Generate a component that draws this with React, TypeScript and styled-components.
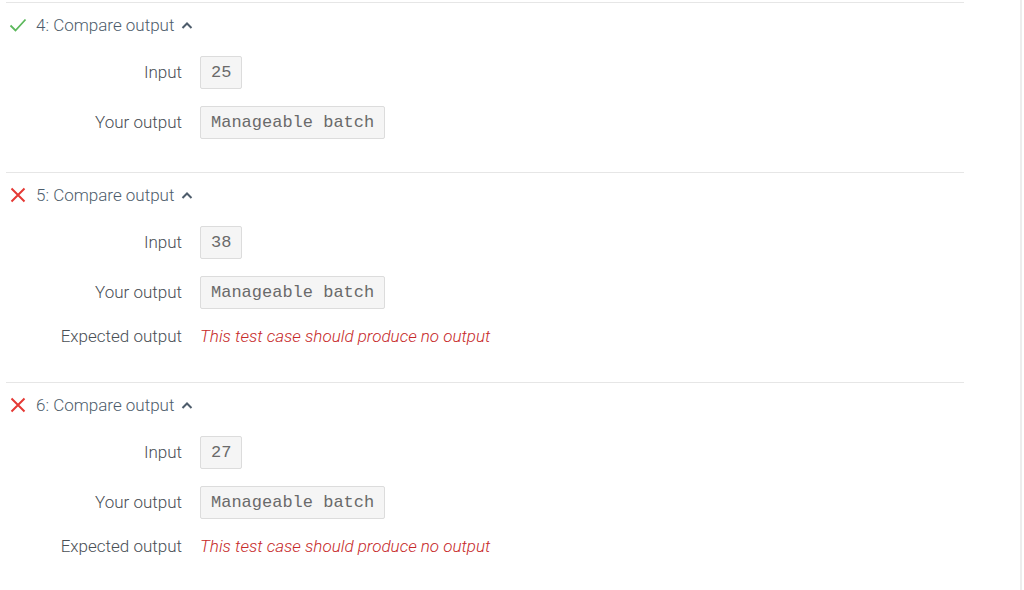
import React from "react";
import styled, { createGlobalStyle } from "styled-components";

const Global = createGlobalStyle`
  html, body { margin: 0; padding: 0; background: #fff; }
  body { font-family: Roboto, "Noto Sans", sans-serif; font-weight: 300; }
`;

const Page = styled.div`
  display: flex;
  width: 1024px;
  height: 590px;
  overflow: hidden;
`;

const Main = styled.div`
  width: 958px;
  margin-left: 6px;
  padding-top: 2px;
`;

const Gutter = styled.div`
  flex: 1;
  display: flex;
  justify-content: flex-end;
  padding-right: 2px;
`;

const ScrollEdge = styled.div`
  width: 2px;
  height: 100%;
  background: #ededed;
`;

const Section = styled.section<{ $pad: number }>`
  border-top: 1px solid #e6e6e6;
  padding: 11px 0 ${(p) => p.$pad}px;
`;

const Heading = styled.div`
  display: flex;
  align-items: center;
  height: 22px;
  color: #4e5d6c;
  font-size: 17px;
  padding-left: 3px;
`;

const StatusIcon = styled.span`
  display: inline-flex;
  width: 18px;
  height: 18px;
  margin-right: 9px;
`;

const Chevron = styled.span`
  display: inline-flex;
  margin-left: 7px;
`;

const Rows = styled.div`
  display: grid;
  grid-template-columns: 176px auto;
  column-gap: 18px;
  align-items: center;
  justify-items: start;
  margin-top: 11px;
`;

const Label = styled.div<{ $h: number }>`
  justify-self: end;
  font-size: 17px;
  color: #4a4f55;
  height: ${(p) => p.$h}px;
  display: flex;
  align-items: center;
`;

const Cell = styled.div<{ $h: number }>`
  height: ${(p) => p.$h}px;
  display: flex;
  align-items: center;
`;

const Code = styled.span`
  font-family: "Liberation Mono", "Courier New", monospace;
  font-weight: 400;
  font-size: 17px;
  color: #6a6a6a;
  background: #f5f5f5;
  border: 1px solid #dcdcdc;
  border-radius: 2px;
  padding: 6px 10px;
  line-height: 19px;
`;

const Expected = styled.span`
  font-style: italic;
  color: #c62828;
  font-size: 17px;
`;

const Check = () => (
  <svg width="18" height="18" viewBox="0 0 18 18">
    <path d="M1.5 9.5 L6.5 14.5 L16.5 3.5" fill="none" stroke="#5cb85c" strokeWidth="1.8" />
  </svg>
);

const Cross = () => (
  <svg width="18" height="18" viewBox="0 0 18 18">
    <path d="M2.5 2.5 L15.5 15.5 M15.5 2.5 L2.5 15.5" fill="none" stroke="#e53935" strokeWidth="2" />
  </svg>
);

const Up = () => (
  <svg width="12" height="8" viewBox="0 0 12 8">
    <path d="M1.5 7 L6 2.5 L10.5 7" fill="none" stroke="#4e5d6c" strokeWidth="2" />
  </svg>
);

type Case = { n: number; pass: boolean; input: string; output: string };

const cases: Case[] = [
  { n: 4, pass: true, input: "25", output: "Manageable batch" },
  { n: 5, pass: false, input: "38", output: "Manageable batch" },
  { n: 6, pass: false, input: "27", output: "Manageable batch" },
];

export default function App() {
  return (
    <>
      <Global />
      <Page>
        <Main>
          {cases.map((c, i) => (
            <Section key={c.n} $pad={i === cases.length - 1 ? 0 : c.pass ? 25 : 27}>
              <Heading>
                <StatusIcon>{c.pass ? <Check /> : <Cross />}</StatusIcon>
                {c.n}: Compare output
                <Chevron>
                  <Up />
                </Chevron>
              </Heading>
              <Rows>
                <Label $h={50}>Input</Label>
                <Cell $h={50}>
                  <Code>{c.input}</Code>
                </Cell>
                <Label $h={50}>Your output</Label>
                <Cell $h={50}>
                  <Code>{c.output}</Code>
                </Cell>
                {!c.pass && (
                  <>
                    <Label $h={38}>Expected output</Label>
                    <Cell $h={38}>
                      <Expected>This test case should produce no output</Expected>
                    </Cell>
                  </>
                )}
              </Rows>
            </Section>
          ))}
        </Main>
        <Gutter>
          <ScrollEdge />
        </Gutter>
      </Page>
    </>
  );
}
